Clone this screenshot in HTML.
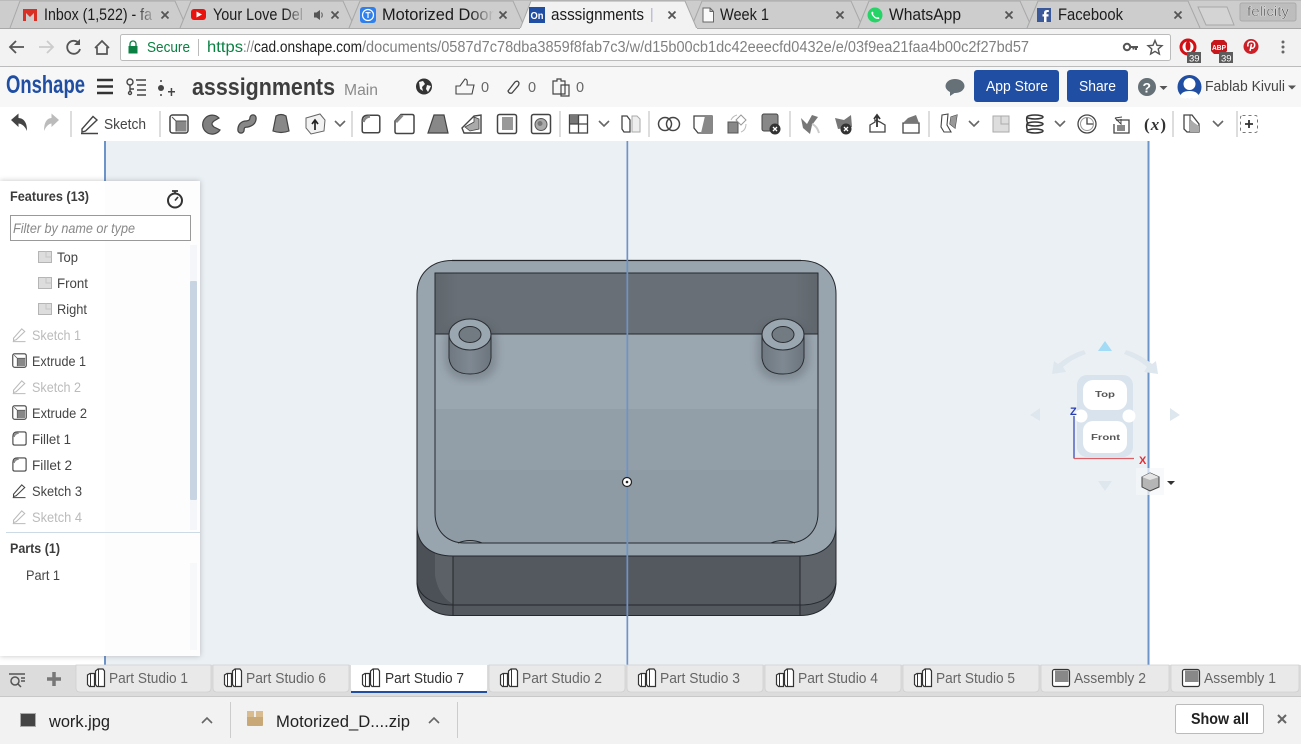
<!DOCTYPE html>
<html><head><meta charset="utf-8"><title>asssignments</title>
<style>
html,body{margin:0;padding:0;width:1301px;height:744px;overflow:hidden;background:#fff}
svg{display:block;position:absolute;left:0;top:0}
text{font-family:"Liberation Sans",sans-serif}
.t{font-size:16.5px;fill:#1c1c1c}
.x{stroke:#555;stroke-width:1.8;fill:none}
.f{font-size:14px;fill:#444}
.g{fill:#bbb}
.h{font-size:13.5px;font-weight:bold;fill:#3c3c3c}
.pt{font-size:14.5px;fill:#666}
.ch{fill:none;stroke:#666;stroke-width:1.6}
.sp{stroke:#ddd;stroke-width:2}
</style></head><body>
<svg width="1301" height="744" viewBox="0 0 1301 744" xmlns="http://www.w3.org/2000/svg">
<defs>
<linearGradient id="fade" x1="0" x2="1"><stop offset="0" stop-color="#cdcdcd" stop-opacity="0"/><stop offset="1" stop-color="#cdcdcd"/></linearGradient>
<linearGradient id="fadeA" x1="0" x2="1"><stop offset="0" stop-color="#f2f2f2" stop-opacity="0"/><stop offset="1" stop-color="#f2f2f2"/></linearGradient>
<linearGradient id="bossg" x1="0" x2="1"><stop offset="0" stop-color="#6f7880"/><stop offset=".5" stop-color="#7f8992"/><stop offset="1" stop-color="#6c757d"/></linearGradient>
<linearGradient id="wall" x1="0" x2="1"><stop offset="0" stop-color="#5f666c"/><stop offset=".06" stop-color="#686f76"/><stop offset=".94" stop-color="#686f76"/><stop offset="1" stop-color="#5f666c"/></linearGradient>
<filter id="bl"><feGaussianBlur stdDeviation="4"/></filter>
<filter id="sh" x="-10%" y="-10%" width="120%" height="120%"><feGaussianBlur stdDeviation="3"/></filter>
<symbol id="ext" viewBox="0 0 20 20" overflow="visible"><rect x="1" y="1" width="18" height="18" rx="2.500" fill="#fff" stroke="#444" stroke-width="1.500"/><path d="M7 7H17.500V17.500H7Z" fill="#888"/><path d="M3 3L7 7M7 7H17.500M7 7V17.500" stroke="#555" fill="none"/></symbol>
<symbol id="fil" viewBox="0 0 20 20" overflow="visible"><path d="M7 1.200H16.500Q18.800 1.200 18.800 3.500V16.500Q18.800 18.800 16.500 18.800H3.500Q1.200 18.800 1.200 16.500V7Q1.200 1.200 7 1.200Z" fill="#fff" stroke="#444" stroke-width="1.500"/><path d="M2.500 8Q3.500 3 9 2.500" stroke="#888" stroke-width="2.500" fill="none"/></symbol>
<symbol id="pen" viewBox="0 0 20 20" overflow="visible"><path d="M2 15L13 2.500L17 6L5.500 17L2 18ZM1 19.500H18" fill="none" stroke="#444" stroke-width="1.400"/></symbol>
<symbol id="pen2" viewBox="0 0 20 20" overflow="visible"><path d="M2 15L13 2.500L17 6L5.500 17L2 18ZM1 19.500H18" fill="none" stroke="#bbb" stroke-width="1.400"/></symbol>
<symbol id="pl" viewBox="0 0 14 14" overflow="visible"><path d="M.500 1.500H13.500V12.500H.500Z" fill="#ddd" stroke="#b5b5b5"/><path d="M8 1.500V7H13.500" fill="none" stroke="#c5c5c5"/></symbol>
<symbol id="ps" viewBox="0 0 20 20" overflow="visible"><path d="M1.500 7L4 5.500H8.500V18.500H3.500L1.500 16.500Z M9.500 3L12 1H17L18.500 3V18.500H11L9.500 16.500Z" fill="#fff" stroke="#333" stroke-width="1.200"/><path d="M4.500 5.500V18.500M12.500 1V18.500" stroke="#333" stroke-width="1"/></symbol>
<symbol id="asm" viewBox="0 0 20 20" overflow="visible"><rect x="1.500" y="1.500" width="17" height="17" rx="2" fill="#fff" stroke="#333" stroke-width="1.200"/><path d="M4 2.500H17.500V14H4Z" fill="#888"/></symbol>
</defs>

<!-- tab strip -->
<rect width="1301" height="29" fill="#cdcdcd"/>
<rect x="0" y="0" width="1301" height="1" fill="#bbb"/>
<g fill="#cdcdcd" stroke="#a8a8a8">
<path d="M10 28L20 1H175L187 28"/><path d="M180 28L191 1H343L355 28"/><path d="M349 28L360 1H513L525 28"/>
<path d="M691 28L702 1H851L863 28"/><path d="M858 28L869 1H1020L1032 28"/><path d="M1027 28L1038 1H1188L1200 28"/>
</g>
<path d="M520 29L531 1H685L697 29Z" fill="#f2f2f2" stroke="#a8a8a8"/>
<path d="M1198 7H1227L1234 25H1206Z" fill="#d4d4d4" stroke="#a8a8a8"/>
<rect x="1240" y="3" width="56" height="18" rx="2" fill="#bdbdbd" stroke="#aaa"/>
<text x="1247" y="16" font-size="14" fill="#555" stroke="#fff" stroke-width=".3" textLength="42" lengthAdjust="spacingAndGlyphs">felicity</text>

<path d="M23 9H37V21H34V13L30 17L26 13V21H23Z" fill="#d93025"/>
<text class="t" x="44" y="20" textLength="108" lengthAdjust="spacingAndGlyphs">Inbox (1,522) - fa</text>
<rect x="135" y="4" width="22" height="22" fill="url(#fade)"/>
<path class="x" d="M161.500 11.500l7 7M168.500 11.500l-7 7"/>

<rect x="191" y="9" width="15" height="11" rx="3" fill="#e8130f"/><path d="M196.500 11.500L202 14.500L196.500 17.500Z" fill="#fff"/>
<text class="t" x="213" y="20" textLength="90" lengthAdjust="spacingAndGlyphs">Your Love Del</text>
<rect x="285" y="4" width="22" height="22" fill="url(#fade)"/>
<path d="M314 12.500H316.500L320 10V20L316.500 17.500H314Z" fill="#555"/><path d="M321.500 12.500Q323 15 321.500 17.500" stroke="#555" fill="none"/>
<path class="x" d="M331.500 11.500l7 7M338.500 11.500l-7 7"/>

<rect x="360" y="7" width="16" height="16" rx="3" fill="#2f80ed"/><circle cx="368" cy="15" r="5.500" fill="none" stroke="#fff" stroke-width="1.200"/><path d="M365.500 12.700H370.500M368 12.700V18" stroke="#fff" stroke-width="1.200"/>
<text class="t" x="382" y="20" textLength="112" lengthAdjust="spacingAndGlyphs">Motorized Door</text>
<rect x="470" y="4" width="24" height="22" fill="url(#fade)"/>
<path class="x" d="M499.500 11.500l7 7M506.500 11.500l-7 7"/>

<rect x="529" y="7" width="16" height="16" fill="#1f4ea3"/><text x="530.500" y="19" font-size="10" font-weight="bold" fill="#fff" textLength="13" lengthAdjust="spacingAndGlyphs">On</text>
<text class="t" x="551" y="20" textLength="93" lengthAdjust="spacingAndGlyphs">asssignments</text>
<rect x="651" y="8" width="1.500" height="14" fill="#aac"/><rect x="645" y="4" width="22" height="22" fill="url(#fadeA)"/>
<path class="x" d="M668.500 11.500l7 7M675.500 11.500l-7 7"/>

<path d="M703 8H710L713.500 11.500V22H703ZM710 8V11.500H713.500" fill="#fafafa" stroke="#666"/>
<text class="t" x="720" y="20" textLength="49" lengthAdjust="spacingAndGlyphs">Week 1</text>
<path class="x" d="M836.500 11.500l7 7M843.500 11.500l-7 7"/>

<circle cx="875" cy="15" r="7.500" fill="#25d366"/><path d="M871.500 12Q873 11 873.500 13L873 14Q874.500 17 877 17.500L878 17Q880 17.500 879 19Q874 19.500 871.500 14Z" fill="#fff"/>
<text class="t" x="889" y="20" textLength="72" lengthAdjust="spacingAndGlyphs">WhatsApp</text>
<path class="x" d="M1005.500 11.500l7 7M1012.500 11.500l-7 7"/>

<rect x="1037" y="8" width="14" height="14" fill="#3b5998"/><path d="M1046.500 22V16.500H1048.500V14.300H1046.500V13Q1046.500 12 1047.500 12H1048.800V10H1047Q1044 10 1044 13V14.300H1042.500V16.500H1044V22Z" fill="#fff"/>
<text class="t" x="1058" y="20" textLength="65" lengthAdjust="spacingAndGlyphs">Facebook</text>
<path class="x" d="M1174.500 11.500l7 7M1181.500 11.500l-7 7"/>

<!-- chrome toolbar -->
<rect y="28" width="1301" height="38" fill="#f2f2f2"/>
<rect x="0" y="28" width="520" height="1" fill="#a8a8a8"/><rect x="697" y="28" width="604" height="1" fill="#a8a8a8"/>
<rect y="66" width="1301" height="1" fill="#bcbcbc"/>
<path d="M24 47H10M16 41L10 47L16 53" fill="none" stroke="#555" stroke-width="1.800"/>
<path d="M39 47H53M47 41L53 47L47 53" fill="none" stroke="#ccc" stroke-width="1.800"/>
<path d="M79 43.500A6.500 6.500 0 1 0 80 49" fill="none" stroke="#555" stroke-width="1.800"/><path d="M80 39V45H74Z" fill="#555"/>
<path d="M95 48L102 41L109 48M97 47V54H107V47" fill="none" stroke="#555" stroke-width="1.700"/>
<rect x="120.500" y="34.500" width="1050" height="26" rx="2" fill="#fff" stroke="#bbb"/>
<path d="M130 47V44A3 3 0 0 1 136 44V47" fill="none" stroke="#0b8043" stroke-width="1.300"/><rect x="128.500" y="46" width="9" height="7.500" fill="#0b8043"/>
<text x="147" y="52" font-size="15" fill="#0b8043" textLength="43" lengthAdjust="spacingAndGlyphs">Secure</text>
<rect x="198" y="39" width="1" height="17" fill="#bbb"/>
<text x="207" y="52" font-size="15.500" fill="#0b8043" textLength="36" lengthAdjust="spacingAndGlyphs">https</text>
<text x="243" y="52" font-size="15.500" fill="#888" textLength="11" lengthAdjust="spacingAndGlyphs">://</text>
<text x="254" y="52" font-size="15.500" fill="#222" textLength="108" lengthAdjust="spacingAndGlyphs">cad.onshape.com</text>
<text x="362" y="52" font-size="15.500" fill="#808080" textLength="667" lengthAdjust="spacingAndGlyphs">/documents/0587d7c78dba3859f8fab7c3/w/d15b00cb1dc42eeecfd0432e/e/03f9ea21faa4b00c2f27bd57</text>
<circle cx="1127" cy="47" r="3.200" fill="none" stroke="#555" stroke-width="2"/><path d="M1130 47H1138M1136 47V50M1133.500 47V49.500" stroke="#555" stroke-width="2" fill="none"/>
<path d="M1155 40.500L1157 45.300L1162 45.700L1158.200 49L1159.400 54L1155 51.400L1150.600 54L1151.800 49L1148 45.700L1153 45.300Z" fill="none" stroke="#555" stroke-width="1.400"/>
<circle cx="1188" cy="47" r="7" fill="#fff" stroke="#d20f14" stroke-width="3"/><ellipse cx="1188" cy="46" rx="2.500" ry="5" fill="#d20f14"/>
<rect x="1187" y="52" width="14" height="11" fill="#5c5c5c"/><text x="1189" y="61.500" font-size="9.500" fill="#fff">39</text>
<path d="M1214 40H1224L1227 43V51L1224 54H1214L1211 51V43Z" fill="#c8161d"/><text x="1212" y="50" font-size="7" font-weight="bold" fill="#fff" textLength="14" lengthAdjust="spacingAndGlyphs">ABP</text>
<rect x="1219" y="52" width="14" height="11" fill="#5c5c5c"/><text x="1221" y="61.500" font-size="9.500" fill="#fff">39</text>
<circle cx="1251" cy="46.500" r="7.500" fill="#cb2027"/><path d="M1250 51L1251.500 44M1248 46.500Q1247 41.500 1251.500 41.500Q1255.500 42 1254.500 46.500Q1252.500 49.500 1250.500 47.500" fill="none" stroke="#fff" stroke-width="1.500"/>
<g fill="#666"><circle cx="1283" cy="42" r="1.500"/><circle cx="1283" cy="47" r="1.500"/><circle cx="1283" cy="52" r="1.500"/></g>

<!-- onshape header -->
<rect y="67" width="1301" height="40" fill="#f7f7f7"/>
<text x="6" y="93" font-size="25" font-weight="bold" fill="#1f4ea3" textLength="79" lengthAdjust="spacingAndGlyphs">Onshape</text>
<path d="M97 80H113M97 86.500H113M97 93H113" stroke="#333" stroke-width="2.500"/>
<g fill="none" stroke="#444" stroke-width="1.400"><circle cx="130" cy="82" r="3"/><circle cx="130" cy="93" r="1.500"/><path d="M130 85V91M130 89H134M136 80H146M137 85H146M137 90H146M137 95H146"/></g>
<g fill="#444"><circle cx="161" cy="88" r="3"/><circle cx="161" cy="81" r="1"/><circle cx="161" cy="95" r="1"/><path d="M168 91H175V92.500H168ZM170.700 88H172.200V96H170.700Z"/></g>
<text x="192" y="95" font-size="24" font-weight="bold" fill="#3e3e3e" textLength="143" lengthAdjust="spacingAndGlyphs">asssignments</text>
<text x="344" y="95" font-size="16" fill="#8a8a8a" textLength="34" lengthAdjust="spacingAndGlyphs">Main</text>
<circle cx="424" cy="86.500" r="8" fill="#333"/><path d="M419 82L423 81L425 84L422 87L423 91L420 89ZM427 85L431 86L428 92L426 89Z" fill="#f7f7f7"/>
<path d="M456 86H460L465 79Q468 79 467 85H474L472 94H460L456 94Z" fill="none" stroke="#444" stroke-width="1.100"/>
<text x="481" y="92" font-size="14.500" fill="#666">0</text>
<path d="M508 91L515 82Q518 80 519 83Q519 85 518 86L512 93Q509 94 508 91Z" fill="none" stroke="#444" stroke-width="1.300"/>
<text x="528" y="92" font-size="14.500" fill="#666">0</text>
<path d="M553 81H557V79H561V81H565V94H553ZM561 85H569V96H561Z" fill="#f7f7f7" stroke="#444" stroke-width="1.200"/>
<text x="576" y="92" font-size="14.500" fill="#666">0</text>
<ellipse cx="955" cy="86" rx="9.500" ry="7" fill="#667077"/><path d="M950 91L950 96L956 92Z" fill="#667077"/>
<rect x="974" y="70" width="85" height="32" rx="3" fill="#1f4ea3"/><text x="986" y="91" font-size="15" fill="#fff" textLength="62" lengthAdjust="spacingAndGlyphs">App Store</text>
<rect x="1067" y="70" width="61" height="32" rx="3" fill="#1f4ea3"/><text x="1079" y="91" font-size="15" fill="#fff" textLength="37" lengthAdjust="spacingAndGlyphs">Share</text>
<circle cx="1147" cy="87" r="9" fill="#667077"/><text x="1142.500" y="92.500" font-size="14" font-weight="bold" fill="#fff">?</text>
<path d="M1159.500 86H1167.500L1163.500 90Z" fill="#555"/>
<circle cx="1189.500" cy="87" r="12" fill="#1f4ea3"/><circle cx="1189.500" cy="84" r="6" fill="#fff"/><path d="M1180 97Q1181 91 1189.500 91Q1198 91 1199 97Q1189.500 101 1180 97Z" fill="#fff"/>
<text x="1205" y="91" font-size="14.500" fill="#444" textLength="80" lengthAdjust="spacingAndGlyphs">Fablab Kivuli</text>
<path d="M1288 85.500H1296L1292 89.500Z" fill="#555"/>

<!-- cad toolbar -->
<rect y="107" width="1301" height="34" fill="#fff"/>
<path d="M11 120L18.500 113.500V118Q27 118.500 27 131Q24 124 18.500 123.500V127Z" fill="#444"/>
<path d="M59 120L51.500 113.500V118Q44 118.500 44 131Q47 124 51.500 123.500V127Z" fill="#bbb"/>
<g class="sp"><path d="M71 111V137M160 111V137M352 111V137M560 111V137M649 111V137M790 111V137M929 111V137M1173 111V137M1237 111V137"/></g>
<use href="#pen" x="80" y="114" width="20" height="20"/>
<text x="104" y="129" font-size="14.500" fill="#444" textLength="42" lengthAdjust="spacingAndGlyphs">Sketch</text>
<use href="#ext" x="169" y="114" width="20" height="20"/>
<path d="M219 118A9.500 9.500 0 1 0 220 130L214 127Q210 124 214 121Z" fill="#808080" stroke="#444" stroke-width="1.200"/>
<path d="M241 130Q241 124 247 124Q253 123 253 118" fill="none" stroke="#444" stroke-width="7.500" stroke-linecap="round"/><path d="M241 130Q241 124 247 124Q253 123 253 118" fill="none" stroke="#888" stroke-width="5" stroke-linecap="round"/>
<path d="M276 116Q281 113 286 116L289 131Q281 134 273 131Z" fill="#888" stroke="#444" stroke-width="1.200"/>
<path d="M306 118L320 114L325 120L324 131L311 134L306 128Z" fill="#f2f2f2" stroke="#666"/><path d="M315 130V121M312 124L315 120L318 124" stroke="#222" stroke-width="1.700" fill="none"/>
<path class="ch" d="M335 121L340 126L345 121"/>
<use href="#fil" x="361" y="114" width="20" height="20"/>
<path d="M401 114.500H412Q414 114.500 414 116.500V131.500Q414 133.500 412 133.500H397Q395 133.500 395 131.500V121Z" fill="#fff" stroke="#444" stroke-width="1.500"/><path d="M395 121L401 114.500L403.500 116L397 123Z" fill="#888"/>
<path d="M434 115H444L448 133H428Z" fill="#888" stroke="#444" stroke-width="1.200"/>
<path d="M462 128L474 116L481 115V133H464Z" fill="#fff" stroke="#444" stroke-width="1.400"/><path d="M465 127L474 122V117L479 119V129L470 131Z" fill="#aaa" stroke="#444" stroke-width=".8"/>
<rect x="497.500" y="114.500" width="19" height="19" rx="2" fill="#fff" stroke="#444" stroke-width="1.500"/><rect x="502" y="117" width="11" height="13" fill="#999"/>
<rect x="531.500" y="114.500" width="19" height="19" rx="2" fill="#fff" stroke="#444" stroke-width="1.500"/><circle cx="541" cy="124.500" r="6" fill="#aaa" stroke="#555"/><circle cx="540" cy="123.500" r="2.500" fill="#777"/>
<rect x="569.500" y="115" width="18" height="18" fill="#fff" stroke="#444" stroke-width="1.300"/><rect x="570" y="115" width="9" height="9" fill="#777"/><path d="M578.500 115V133M570 124H587" stroke="#444" stroke-width="1.300"/>
<path class="ch" d="M599 121L604 126L609 121"/>
<path d="M622 116H627L630 120V132H624L622 129Z" fill="#fff" stroke="#444" stroke-width="1.300"/><path d="M632 116H637L640 119V132H632Z" fill="#eee" stroke="#aaa"/>
<circle cx="665" cy="124" r="6.500" fill="#fff" stroke="#444" stroke-width="1.500"/><circle cx="673" cy="124" r="6.500" fill="none" stroke="#444" stroke-width="1.500"/>
<path d="M694 116H712V133H698L694 128Z" fill="#fff" stroke="#444" stroke-width="1.300"/><path d="M705 116H712V133H701Z" fill="#888"/>
<rect x="728" y="122" width="10" height="11" fill="#888" stroke="#555"/><path d="M741 115L746 120L741 125L736 120Z" fill="#fff" stroke="#999"/><path d="M731 120Q733 116 737 115M746 124Q746 130 741 132" stroke="#bbb" fill="none"/>
<rect x="762" y="114" width="16" height="17" rx="2" fill="#888" stroke="#444"/><circle cx="775" cy="129" r="5.500" fill="#333"/><path d="M773 127l4 4M777 127l-4 4" stroke="#fff" stroke-width="1.300"/>
<path d="M801 118L807 124L812 115L818 117L812 125L810 134L803 128Z" fill="#777"/><path d="M812 124Q817 126 819 133" stroke="#ccc" stroke-width="2" fill="none"/>
<path d="M835 118L844 120L851 115L852 127L838 129Z" fill="#777"/><circle cx="846" cy="129" r="5.500" fill="#333"/><path d="M844 127l4 4M848 127l-4 4" stroke="#fff" stroke-width="1.300"/>
<path d="M870 125L875 122V120L880 122L885 125V132H870Z" fill="#fff" stroke="#444" stroke-width="1.300"/><path d="M877 127V116M874 119L877 115L880 119" stroke="#333" stroke-width="1.800" fill="none"/>
<path d="M903 123H919V133H903Z" fill="#fff" stroke="#444" stroke-width="1.300"/><path d="M903 123L908 118L916 115L919 123Z" fill="#777"/>
<path d="M942 115L948 114L947 125L951 132H944L941 127ZM951 117L957 115L955 128L950 124Z" fill="#fff" stroke="#444" stroke-width="1.100"/><path d="M951 117L957 115L955 128L950 124Z" fill="#999"/>
<path class="ch" d="M969 121L974 126L979 121"/>
<path d="M993 116H1009V132H993Z" fill="#ddd" stroke="#aaa"/><path d="M1001 116V124H1009" fill="none" stroke="#aaa"/>
<g fill="none" stroke="#333" stroke-width="1.500"><ellipse cx="1035" cy="117" rx="8" ry="2"/><ellipse cx="1035" cy="124" rx="8" ry="2"/><ellipse cx="1035" cy="131" rx="8" ry="2"/><path d="M1027 117Q1026 120 1028 124M1027 124Q1026 128 1028 131"/></g>
<path class="ch" d="M1055 121L1060 126L1065 121"/>
<circle cx="1087" cy="124" r="9" fill="#fff" stroke="#444" stroke-width="1.300"/><circle cx="1087" cy="124" r="6.500" fill="none" stroke="#999"/><path d="M1087 118V124H1093" fill="none" stroke="#444" stroke-width="1.300"/>
<path d="M1116 120H1129V133H1114V124" fill="#fff" stroke="#444" stroke-width="1.300"/><path d="M1115 118L1121 124V119M1115 118L1122 117" stroke="#444" fill="none"/><rect x="1117" y="125" width="8" height="6" fill="#888"/>
<text x="1144" y="130" font-size="17" font-weight="bold" fill="#333" style="font-family:'Liberation Serif',serif" textLength="22">(<tspan font-style="italic">x</tspan>)</text>
<path d="M1184 115H1192L1199 124V132H1187L1184 129Z" fill="#fff" stroke="#444" stroke-width="1.300"/><path d="M1190 115V132M1190 120L1199 128" stroke="#444" fill="none"/><path d="M1190 120L1199 126V132H1190Z" fill="#aaa"/>
<path class="ch" d="M1213 121L1218 126L1223 121"/>
<rect x="1240.500" y="115.500" width="17" height="17" rx="2" fill="none" stroke="#777" stroke-dasharray="3 3"/><path d="M1249 120V128M1245 124H1253" stroke="#333" stroke-width="1.800"/>

<!-- viewport -->
<rect x="105" y="141" width="1043" height="524" fill="#ebf0f5"/>
<rect x="0" y="141" width="105" height="524" fill="#fff"/>

<!-- model -->
<path d="M417 528V583C418 603 432 615.500 453 615.500H800C821 615.500 835 603 836 583V528Z" fill="#54585f"/>
<path d="M417 528V583C419 596 432 605 453 605V556C432 556 418 545 417 528Z" fill="#4c5057"/>
<path d="M435 545V575C437 590 445 600 453 604V556C445 554 439 551 435 545Z" fill="#5c6168"/>
<path d="M836 528V583C834 596 821 605 800 605V556C821 556 835 545 836 528Z" fill="#5e636a"/>
<path d="M417 294C417 274 431 260.500 452 260.500H801C822 260.500 836 274 836 294V526C836 545 822 556 800 556H453C431 556 417 545 417 526Z" fill="#98a5af"/>
<path d="M452 260.500H801" stroke="#6c7379" stroke-width="1.500"/>
<path d="M435 273H818V513C818 531 806 543 788 543H465C447 543 435 531 435 513Z" fill="#94a1ab"/>
<path d="M435 334H818V409H435Z" fill="#9aa6b0"/>
<path d="M435 409H818V470H435Z" fill="#929ea8"/>
<path d="M435 470H818V513C818 531 806 543 788 543H465C447 543 435 531 435 513Z" fill="#8e9ba5"/>
<rect x="435" y="273" width="383" height="61" fill="url(#wall)"/>
<g filter="url(#bl)" fill="#3f464c" opacity=".28"><rect x="445" y="322" width="52" height="58" rx="20"/><rect x="757" y="322" width="52" height="58" rx="20"/></g>
<g fill="none" stroke="#25292d" stroke-width="1">
<path d="M435 273H818V513C818 531 806 543 788 543H465C447 543 435 531 435 513Z"/>
<path d="M435 334H818"/>
<path d="M417 294C417 274 431 260.500 452 260.500H801C822 260.500 836 274 836 294V526C836 545 822 556 800 556H453C431 556 417 545 417 526Z"/>
<path d="M417 526V583C418 603 432 615.500 453 615.500H800C821 615.500 835 603 836 583V526"/>
<path d="M417 583C419 596 432 605 453 605H800C821 605 834 596 836 583"/>
<path d="M453 556V615M800 556V615"/>
<path d="M458 543Q470 538 482 543M771 543Q783 538 795 543" stroke-width="1"/>
</g>
<g stroke="#2a2e33" stroke-width="1">
<path d="M449 334V358Q451 374 470 374Q489 374 491 358V334Z" fill="url(#bossg)"/>
<ellipse cx="470" cy="334.500" rx="21" ry="15.500" fill="#9aa6b0"/>
<ellipse cx="470" cy="334.500" rx="11" ry="8" fill="#737b82"/>
<path d="M762 334V358Q764 374 783 374Q802 374 804 358V334Z" fill="url(#bossg)"/>
<ellipse cx="783" cy="334.500" rx="21" ry="15.500" fill="#9aa6b0"/>
<ellipse cx="783" cy="334.500" rx="11" ry="8" fill="#737b82"/>
</g>
<!-- planes -->
<g fill="#6d94c9"><rect x="104" y="141" width="2" height="40"/><rect x="626.500" y="141" width="1.700" height="524"/><rect x="1147.500" y="141" width="2" height="524"/><rect x="104" y="655" width="2" height="10"/></g>
<circle cx="627" cy="482" r="4.500" fill="#fff" stroke="#222" stroke-width="1.200"/><circle cx="627" cy="482" r="1.300" fill="#222"/>

<!-- cube nav -->
<path d="M1098 351L1105 341L1112 351Z" fill="#a2dbf5"/>
<g fill="#dfe7ee">
<path d="M1084 350L1086 354Q1072 359 1063 367L1066 372L1052 374L1054 361L1058 364Q1070 354 1084 350Z"/>
<path d="M1126 350L1124 354Q1138 359 1147 367L1144 372L1158 374L1156 361L1152 364Q1140 354 1126 350Z"/>
<path d="M1040 408V421L1030 415Z"/><path d="M1170 408V421L1180 415Z"/><path d="M1098 481H1112L1105 491Z"/>
</g>
<rect x="1077" y="375" width="56" height="82" rx="10" fill="#d8e3ed"/>
<rect x="1083" y="380" width="44" height="30" rx="10" fill="#fff"/><rect x="1083" y="421" width="44" height="32" rx="10" fill="#fff"/>
<circle cx="1081" cy="416" r="6.500" fill="#fff"/><circle cx="1129" cy="416" r="6.500" fill="#fff"/>
<text x="1095" y="397" font-size="8" font-weight="bold" fill="#555" textLength="20" lengthAdjust="spacingAndGlyphs">Top</text>
<text x="1091" y="440" font-size="8" font-weight="bold" fill="#555" textLength="29" lengthAdjust="spacingAndGlyphs">Front</text>
<path d="M1074 416V458.500" stroke="#2b3fb5" stroke-width="1.200"/><path d="M1074 458.500H1134" stroke="#dd5f66" stroke-width="1.200"/>
<text x="1070" y="415" font-size="11" font-weight="bold" fill="#2b3fb5">Z</text>
<text x="1139" y="464" font-size="11" font-weight="bold" fill="#e52b32">X</text>
<rect x="1136" y="468" width="28" height="27" fill="#f4f6f8" opacity=".7"/>
<path d="M1150 473L1159 477V487L1150 491L1142 487V477Z" fill="#b5b5b5" stroke="#444"/><path d="M1142 477L1150 473L1159 477L1150 480Z" fill="#e4e4e4"/>
<path d="M1167 481H1175L1171 485Z" fill="#333"/>

<!-- feature panel -->
<rect x="0" y="181" width="200" height="475" fill="#555" opacity=".35" filter="url(#sh)"/>
<rect x="0" y="181" width="200" height="475" fill="#fff"/>
<rect x="105" y="181" width="95" height="475" fill="#fdfdfe"/>
<text class="h" x="10" y="201" textLength="79" lengthAdjust="spacingAndGlyphs">Features (13)</text>
<circle cx="175" cy="200.500" r="7" fill="none" stroke="#333" stroke-width="2"/><path d="M172 191H178M175 191V194M175 200.500L178 197" stroke="#333" stroke-width="1.700" fill="none"/>
<rect x="10.500" y="215.500" width="180" height="25" fill="#fff" stroke="#999"/>
<text x="13" y="233" font-size="14" font-style="italic" fill="#888" textLength="122" lengthAdjust="spacingAndGlyphs">Filter by name or type</text>
<rect x="190" y="245" width="7" height="285" fill="#f4f6f9"/><rect x="190" y="281" width="7" height="219" rx="1" fill="#c8d4e2"/>
<use href="#pl" x="38" y="250" width="14" height="14"/><text class="f" x="57" y="262" textLength="21" lengthAdjust="spacingAndGlyphs">Top</text>
<use href="#pl" x="38" y="276" width="14" height="14"/><text class="f" x="57" y="288" textLength="31" lengthAdjust="spacingAndGlyphs">Front</text>
<use href="#pl" x="38" y="302" width="14" height="14"/><text class="f" x="57" y="314" textLength="30" lengthAdjust="spacingAndGlyphs">Right</text>
<use href="#pen2" x="12" y="327" width="15" height="15"/><text class="f g" x="32" y="340" textLength="49" lengthAdjust="spacingAndGlyphs">Sketch 1</text>
<use href="#ext" x="12" y="353" width="15" height="15"/><text class="f" x="32" y="366" textLength="54" lengthAdjust="spacingAndGlyphs">Extrude 1</text>
<use href="#pen2" x="12" y="379" width="15" height="15"/><text class="f g" x="32" y="392" textLength="49" lengthAdjust="spacingAndGlyphs">Sketch 2</text>
<use href="#ext" x="12" y="405" width="15" height="15"/><text class="f" x="32" y="418" textLength="55" lengthAdjust="spacingAndGlyphs">Extrude 2</text>
<use href="#fil" x="12" y="431" width="15" height="15"/><text class="f" x="32" y="444" textLength="39" lengthAdjust="spacingAndGlyphs">Fillet 1</text>
<use href="#fil" x="12" y="457" width="15" height="15"/><text class="f" x="32" y="470" textLength="40" lengthAdjust="spacingAndGlyphs">Fillet 2</text>
<use href="#pen" x="12" y="483" width="15" height="15"/><text class="f" x="32" y="496" textLength="50" lengthAdjust="spacingAndGlyphs">Sketch 3</text>
<use href="#pen2" x="12" y="509" width="15" height="15"/><text class="f g" x="32" y="522" textLength="50" lengthAdjust="spacingAndGlyphs">Sketch 4</text>
<rect x="6" y="532" width="194" height="1" fill="#ccdae6"/>
<text class="h" x="10" y="553" textLength="50" lengthAdjust="spacingAndGlyphs">Parts (1)</text>
<text class="f" x="26" y="580" textLength="34" lengthAdjust="spacingAndGlyphs">Part 1</text>
<rect x="190" y="563" width="7" height="87" fill="#f6f8fa"/>

<!-- bottom tabs -->
<rect y="665" width="1301" height="31" fill="#dcdcdc"/>
<g fill="none" stroke="#555" stroke-width="1.500"><path d="M9 674H25"/><circle cx="15" cy="681" r="4"/><path d="M18 684L21 687M21 678H25M21 681H25"/></g>
<path d="M47 679H61M54 672V686" stroke="#777" stroke-width="3.500"/>
<g fill="#e9e9e9" stroke="#d0d0d0" stroke-width=".8">
<path d="M76 665H211V688Q211 692 207 692H80Q76 692 76 688Z"/>
<path d="M213 665H349V688Q349 692 345 692H217Q213 692 213 688Z"/>
<path d="M489 665H625V688Q625 692 621 692H493Q489 692 489 688Z"/>
<path d="M627 665H763V688Q763 692 759 692H631Q627 692 627 688Z"/>
<path d="M765 665H901V688Q901 692 897 692H769Q765 692 765 688Z"/>
<path d="M903 665H1039V688Q1039 692 1035 692H907Q903 692 903 688Z"/>
<path d="M1041 665H1169V688Q1169 692 1165 692H1045Q1041 692 1041 688Z"/>
<path d="M1171 665H1299V688Q1299 692 1295 692H1175Q1171 692 1171 688Z"/>
</g>
<path d="M351 665H487V688Q487 693 483 693H355Q351 693 351 688Z" fill="#fff"/><rect x="351" y="691" width="136" height="2" fill="#1f4ea3"/>
<use href="#ps" x="86" y="668" width="20" height="20"/><text class="pt" x="109" y="683" textLength="79" lengthAdjust="spacingAndGlyphs">Part Studio 1</text>
<use href="#ps" x="223" y="668" width="20" height="20"/><text class="pt" x="246" y="683" textLength="80" lengthAdjust="spacingAndGlyphs">Part Studio 6</text>
<use href="#ps" x="361" y="668" width="20" height="20"/><text class="pt" x="385" y="683" textLength="79" lengthAdjust="spacingAndGlyphs" style="fill:#333">Part Studio 7</text>
<use href="#ps" x="499" y="668" width="20" height="20"/><text class="pt" x="522" y="683" textLength="80" lengthAdjust="spacingAndGlyphs">Part Studio 2</text>
<use href="#ps" x="637" y="668" width="20" height="20"/><text class="pt" x="660" y="683" textLength="80" lengthAdjust="spacingAndGlyphs">Part Studio 3</text>
<use href="#ps" x="775" y="668" width="20" height="20"/><text class="pt" x="798" y="683" textLength="80" lengthAdjust="spacingAndGlyphs">Part Studio 4</text>
<use href="#ps" x="913" y="668" width="20" height="20"/><text class="pt" x="936" y="683" textLength="79" lengthAdjust="spacingAndGlyphs">Part Studio 5</text>
<use href="#asm" x="1051" y="668" width="20" height="20"/><text class="pt" x="1074" y="683" textLength="72" lengthAdjust="spacingAndGlyphs">Assembly 2</text>
<use href="#asm" x="1181" y="668" width="20" height="20"/><text class="pt" x="1204" y="683" textLength="72" lengthAdjust="spacingAndGlyphs">Assembly 1</text>

<!-- download bar -->
<rect y="696" width="1301" height="48" fill="#f2f2f2"/>
<rect y="696" width="1301" height="1" fill="#c8c8c8"/>
<rect x="20.500" y="713.500" width="15" height="13" fill="#444" stroke="#aaa"/>
<text x="49" y="727" font-size="16.500" fill="#222" textLength="61" lengthAdjust="spacingAndGlyphs">work.jpg</text>
<path d="M202 723L207 718L212 723" fill="none" stroke="#666" stroke-width="1.600"/>
<rect x="230" y="702" width="1" height="36" fill="#ccc"/>
<rect x="247" y="713" width="16" height="13" rx="1" fill="#c9a877"/><rect x="247" y="711" width="16" height="6" fill="#d8bb8e"/><rect x="254" y="711" width="2" height="6" fill="#eee"/>
<text x="276" y="727" font-size="16.500" fill="#222" textLength="134" lengthAdjust="spacingAndGlyphs">Motorized_D....zip</text>
<path d="M429 723L434 718L439 723" fill="none" stroke="#666" stroke-width="1.600"/>
<rect x="457" y="702" width="1" height="36" fill="#ccc"/>
<rect x="1175.500" y="704.500" width="88" height="29" rx="2" fill="#fff" stroke="#bbb"/>
<text x="1191" y="724" font-size="15.500" font-weight="bold" fill="#222" textLength="58" lengthAdjust="spacingAndGlyphs">Show all</text>
<path d="M1278 715l8 8M1286 715l-8 8" stroke="#666" stroke-width="2"/>
</svg>
</body></html>
